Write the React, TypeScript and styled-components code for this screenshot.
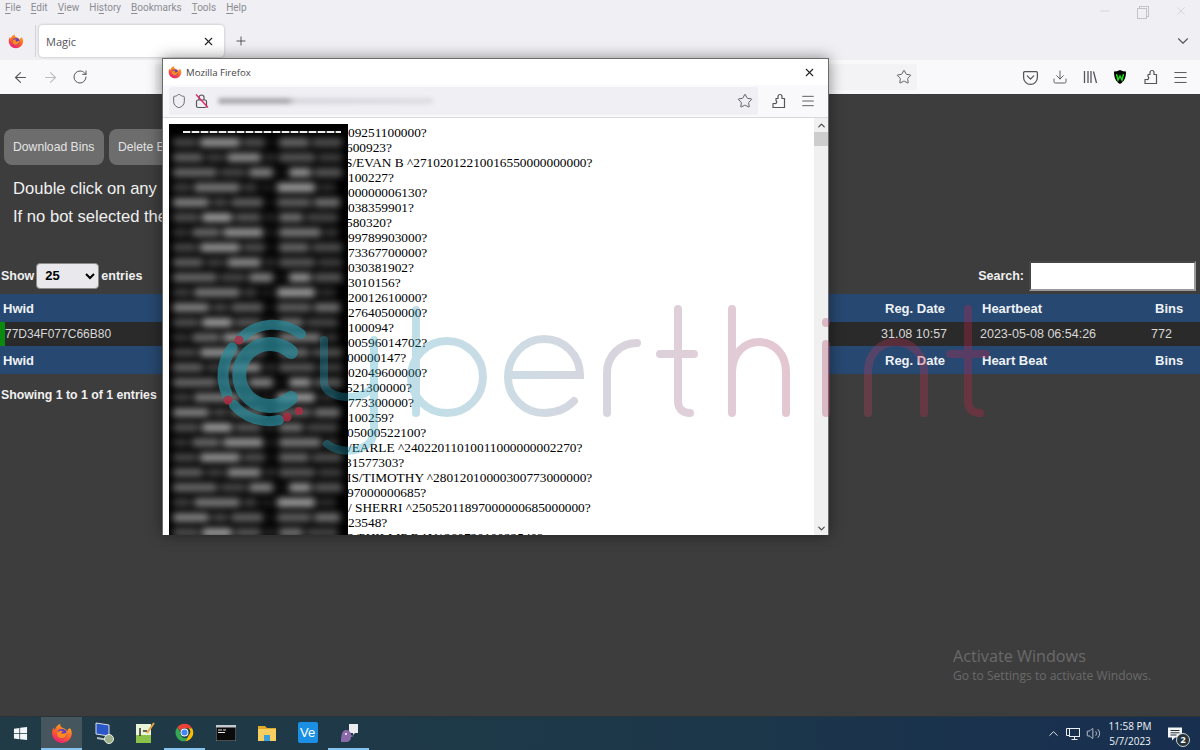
import styled, { createGlobalStyle } from "styled-components";
import {
    ArrowLeft,
    ArrowRight,
    ChevronDown,
    ChevronUp,
    Download,
    Menu,
    Minus,
    Plus,
    RotateCw,
    Shield,
    Star,
    Volume2,
    X,
} from "lucide-react";

const GlobalStyle = createGlobalStyle`
    html, body {
        margin: 0;
        padding: 0;
        background: #3d3d3d;
    }
    * {
        box-sizing: border-box;
    }
`;

const Page = styled.div`
    position: relative;
    width: 1200px;
    height: 750px;
    overflow: hidden;
    display: flex;
    flex-direction: column;
    font-family: "Liberation Sans", Arial, sans-serif;
`;

const MenuBar = styled.div`
    height: 20px;
    padding: 2px 0 0 5px;
    display: flex;
    align-items: flex-start;
    gap: 10px;
    background: #f0f0f4;
    color: #8c8c92;
    font: 10px Roboto, sans-serif;
    position: relative;

    u {
        text-underline-offset: 2px;
    }
`;

const WindowControls = styled.div`
    position: absolute;
    top: 4px;
    right: 12px;
    display: flex;
    gap: 24px;
    color: #c4c4c8;
`;

const RestoreIcon = styled.div`
    width: 14px;
    height: 14px;
    position: relative;

    &::before,
    &::after {
        content: "";
        position: absolute;
        border: 1px solid #c4c4c8;
        width: 8px;
        height: 9px;
    }
    &::before {
        left: 3px;
        top: 2px;
    }
    &::after {
        left: 1px;
        top: 4px;
        background: #f0f0f4;
    }
`;

const TabBar = styled.div`
    height: 40px;
    display: flex;
    align-items: flex-start;
    padding: 5px 8px 0 8px;
    background: #f0f0f4;
`;

const TabSlot = styled.div`
    width: 28px;
    height: 32px;
    display: flex;
    align-items: center;
    border-right: 1px solid #d4d4d8;
    margin-right: 3px;
`;

const Tab = styled.div`
    width: 185px;
    height: 32px;
    padding: 0 9px 0 7px;
    display: flex;
    align-items: center;
    justify-content: space-between;
    background: #fff;
    border-radius: 4px;
    box-shadow: 0 0 3px rgba(0, 0, 0, 0.25);
    color: #55555c;
    font: 11px "Open Sans", sans-serif;
`;

const NewTab = styled.div`
    width: 34px;
    height: 32px;
    display: flex;
    align-items: center;
    justify-content: center;
    color: #444;
`;

const TabSpacer = styled.div`
    flex: 1;
`;

const ListAll = styled.div`
    height: 32px;
    display: flex;
    align-items: center;
    color: #55555c;
`;

const NavBar = styled.div`
    height: 34px;
    display: flex;
    align-items: center;
    padding: 0 5px;
    background: #f9f9fb;
    color: #55555c;
`;

const NavButton = styled.div<{ $faded?: boolean }>`
    width: 30px;
    height: 30px;
    display: flex;
    align-items: center;
    justify-content: center;
    color: ${p => (p.$faded ? "#bcbcc2" : "#55555c")};
`;

const NavUrl = styled.div`
    flex: 1;
    height: 26px;
    margin: 0 98px 0 60px;
    display: flex;
    align-items: center;
    justify-content: flex-end;
    padding-right: 5px;
    background: #f3f3f6;
    border-radius: 2px;
`;

const Content = styled.div`
    flex: 1;
    background: #3d3d3d;
    padding-top: 34px;
    color: #f0f0f0;
    border-top: 1px solid #3a3a3a;
`;

const ButtonRow = styled.div`
    display: flex;
    gap: 5px;
    padding-left: 4px;
`;

const ActionButton = styled.button`
    width: 100px;
    height: 36px;
    padding: 0 0 0 9px;
    border: 0;
    border-radius: 8px;
    background: #6d6d6d;
    color: #e4e4e4;
    font: 12.2px "Liberation Sans", Arial, sans-serif;
    text-align: left;
    white-space: nowrap;
`;

const Notes = styled.div`
    margin: 10px 0 0 13px;
    font-size: 16.6px;
    line-height: 28px;
    white-space: nowrap;
`;

const TableTools = styled.div`
    margin-top: 29px;
    height: 31px;
    padding: 0 4px 0 1px;
    display: flex;
    align-items: center;
    justify-content: space-between;
    font-size: 12.5px;
    font-weight: 700;
`;

const ToolGroup = styled.label<{ $gap: number }>`
    display: flex;
    align-items: center;
    gap: ${p => p.$gap}px;
`;

const LengthSelect = styled.select`
    width: 63px;
    height: 26px;
    padding-left: 4px;
    border: 1px solid #8a8a8a;
    border-radius: 4px;
    background: #e9e9ed;
    color: #000;
    font: 700 13px "Liberation Sans", Arial, sans-serif;
`;

const SearchInput = styled.input`
    width: 167px;
    height: 30px;
    border: 2px inset #9a9a9a;
    background: #fff;
`;

const TableRow = styled.div<{ $head?: boolean }>`
    height: ${p => (p.$head ? 28 : 24)}px;
    display: grid;
    grid-template-columns: 881px 99px 171px 49px;
    align-items: center;
    background: ${p => (p.$head ? "#274870" : "#2a2a2a")};
    font-size: ${p => (p.$head ? 13 : 12.5)}px;
    font-weight: ${p => (p.$head ? 700 : 400)};
    color: ${p => (p.$head ? "#eef2f6" : "#d8d8d8")};
`;

const Cell = styled.div<{ $pad?: number }>`
    padding-left: ${p => p.$pad ?? 0}px;
    white-space: nowrap;
`;

const HwidCell = styled.div`
    height: 100%;
    display: flex;
    align-items: center;
    border-left: 5px solid #0b8a10;
    font-size: 12px;
`;

const TableTop = styled.div`
    margin-top: 3px;
`;

const TableInfo = styled.div`
    margin: 14px 0 0 1px;
    font-size: 12.3px;
    font-weight: 700;
`;

const Taskbar = styled.div`
    height: 34px;
    display: flex;
    align-items: center;
    background: linear-gradient(90deg, #203a46 0%, #1d3848 50%, #182f50 100%);
    border-top: 1px solid #2a3338;
`;

const StartButton = styled.div`
    width: 41px;
    display: flex;
    justify-content: center;
`;

const TaskApp = styled.div<{ $state?: "active" | "open" }>`
    width: 41px;
    height: 33px;
    display: flex;
    align-items: center;
    justify-content: center;
    background: ${p => (p.$state === "active" ? "#45565e" : "transparent")};
    border-bottom: 2px solid ${p => (p.$state ? "#86c3ee" : "transparent")};
`;

const Tray = styled.div`
    margin-left: auto;
    display: flex;
    align-items: center;
    color: #e8eef2;
`;

const TrayIcon = styled.div`
    width: 20px;
    display: flex;
    justify-content: center;
`;

const Clock = styled.div`
    width: 50px;
    margin-left: 2px;
    text-align: center;
    font: 10px/15px "Open Sans", sans-serif;
    color: #f0f4f6;
    white-space: nowrap;
`;

const Notify = styled.div`
    position: relative;
    width: 40px;
    height: 24px;
    display: flex;
    justify-content: center;
    align-items: center;
    margin-right: 5px;
`;

const NotifyBadge = styled.div`
    position: absolute;
    right: 5px;
    bottom: -1px;
    width: 14px;
    height: 14px;
    border-radius: 50%;
    border: 1px solid #cfd6da;
    background: #26333a;
    color: #fff;
    font: 700 9px/12px "Open Sans", sans-serif;
    text-align: center;
`;

const ActivateNote = styled.div`
    position: absolute;
    left: 953px;
    top: 645px;
    color: #6a6a6a;
    font: 12.1px/18px "Open Sans", sans-serif;
`;

const ActivateTitle = styled.div`
    font-size: 16.2px;
    line-height: 22px;
`;

const Popup = styled.div`
    position: absolute;
    left: 162px;
    top: 58px;
    width: 667px;
    height: 477px;
    display: flex;
    flex-direction: column;
    overflow: hidden;
    background: #fff;
    border: 1px solid #6b6b6b;
    border-bottom: 0;
    box-shadow: 0 0 14px rgba(0, 0, 0, 0.45);
`;

const PopupTitle = styled.div`
    height: 26px;
    padding: 0 12px 0 5px;
    display: flex;
    align-items: center;
    gap: 4px;
    color: #444;
    font: 9.6px "Open Sans", sans-serif;
`;

const PopupTitleText = styled.span`
    flex: 1;
`;

const PopupBar = styled.div`
    height: 33px;
    padding: 0 12px 0 6px;
    display: flex;
    align-items: center;
    gap: 14px;
    background: #f9f9fb;
    border-bottom: 1px solid #d8d8dc;
    color: #55555c;
`;

const PopupUrl = styled.div`
    flex: 1;
    height: 28px;
    margin-right: -2px;
    padding: 0 5px 0 2px;
    display: flex;
    align-items: center;
    justify-content: space-between;
    background: #f0f0f4;
    border-radius: 2px;
`;

const UrlGroup = styled.div`
    display: flex;
    align-items: center;
    gap: 7px;
`;

const BlurredUrl = styled.div`
    width: 215px;
    height: 6px;
    margin-left: 1px;
    border-radius: 3px;
    background: linear-gradient(90deg, #a8a8ae 0%, #a8a8ae 32%, #d6d6dc 36%, #dcdce2 100%);
    filter: blur(2px);
`;

const PopupBody = styled.div`
    position: relative;
    flex: 1;
    display: flex;
    min-height: 0;
    overflow: hidden;
`;

const DumpText = styled.div`
    flex: 1;
    padding: 7px 0 0 185px;
    font: 13.33px/15px "Liberation Serif", "Times New Roman", serif;
    color: #000;
    white-space: nowrap;
`;

const DumpLine = styled.div<{ $shift?: number }>`
    height: 15px;
    margin-left: ${p => -(p.$shift ?? 0)}px;
`;

const Redaction = styled.div`
    position: absolute;
    left: 6px;
    top: 6px;
    width: 179px;
    bottom: 0;
    padding-top: 7px;
    overflow: hidden;
    background: #000;
`;

const RedactionTop = styled.div`
    height: 1.5px;
    margin: 0 7px 2px 14px;
    background: repeating-linear-gradient(90deg, #eee 0 7px, #555 7px 9px);
`;

const BlurRow = styled.div`
    height: 15px;
    display: flex;
    align-items: center;
    padding-left: 4px;
    gap: 3px;
    filter: blur(3.5px);
`;

const BlurBit = styled.div`
    height: 9px;
    flex: none;
    background: #b4b4b4;
`;

const Scrollbar = styled.div`
    width: 14px;
    display: flex;
    flex-direction: column;
    align-items: center;
    background: #f0f0f0;
    color: #444;
`;

const ScrollArrow = styled.div`
    height: 14px;
    display: flex;
    align-items: center;
`;

const ScrollThumb = styled.div`
    width: 100%;
    height: 14px;
    background: #cdcdcd;
`;

const ScrollTrack = styled.div`
    flex: 1;
`;

const WatermarkSvg = styled.svg`
    position: absolute;
    left: 0;
    top: 0;
    pointer-events: none;
`;

const dumpLines: [string, number?][] = [
    ["09251100000?"],
    ["600923?", 2],
    ["S/EVAN B ^27102012210016550000000000?", 3],
    ["100227?"],
    ["00000006130?"],
    ["038359901?"],
    ["580320?", 2],
    ["99789903000?"],
    ["73367700000?"],
    ["030381902?"],
    ["3010156?"],
    ["20012610000?"],
    ["27640500000?"],
    ["100094?"],
    ["00596014702?"],
    ["00000147?", 1],
    ["02049600000?"],
    ["521300000?", 2],
    ["773300000?"],
    ["100259?"],
    ["05000522100?", 1],
    ["/EARLE ^24022011010011000000002270?"],
    ["31577303?", 3],
    ["IS/TIMOTHY ^28012010000300773000000?", 1],
    ["97000000685?", 1],
    ["/ SHERRI ^25052011897000000685000000?"],
    ["23548?"],
    ["D/PHILLIP RAY^26072010022540?", 3],
];

// [width, brightness] per smear, just has to look like blurred text
const blurPattern: [number, number][][] = [
    [[24, 0.4], [40, 0.85], [22, 0.45], [8, 0.1], [30, 0.6], [30, 0.45]],
    [[30, 0.55], [18, 0.35], [34, 0.8], [12, 0.25], [36, 0.5], [24, 0.35]],
    [[44, 0.6], [26, 0.4], [24, 0.75], [10, 0.1], [22, 0.85], [28, 0.5]],
    [[18, 0.35], [46, 0.7], [14, 0.35], [14, 0.15], [38, 0.9], [18, 0.25]],
    [[36, 0.75], [16, 0.4], [32, 0.55], [8, 0.1], [34, 0.55], [26, 0.65]],
    [[26, 0.45], [30, 0.9], [26, 0.5], [12, 0.2], [24, 0.65], [32, 0.4]],
    [[16, 0.3], [28, 0.6], [40, 0.85], [10, 0.15], [42, 0.7], [14, 0.3]],
];

function FirefoxLogo({ size = 16 }: { size?: number }) {
    return (
        <svg width={size} height={size} viewBox="0 0 32 32">
            <defs>
                <linearGradient id="ffg" x1="0.7" y1="0" x2="0.2" y2="1">
                    <stop offset="0" stopColor="#ffb01f" />
                    <stop offset="0.55" stopColor="#ff5a2c" />
                    <stop offset="1" stopColor="#e31587" />
                </linearGradient>
            </defs>
            <path
                d="M28 9c1.8 3 2.6 6.2 2 9.6C28.800 25.600 23 30.500 16 30.500 8 30.500 1.500 24 1.500 16c0-3 1-6 2.500-8 .1 1.600.7 2.800 1.600 3.600C6.500 7 10 4 13.500 2.500c-.6 2.500.4 4.200 2.500 5.500 3 1.800 6.500 2 7.500 6C24 10 26 9 28 9z"
                fill="url(#ffg)"
            />
            <circle cx="16" cy="17" r="7" fill="#5b3fc4" />
            <path d="M9 15c3-3 7-3 9-1-2 0-3 1-3 2.500 3 1 6 0 8-2 .5 5-3 9-7.500 9S8 20 9 15z" fill="#ff8a1f" />
        </svg>
    );
}

function PocketIcon() {
    return (
        <svg width="17" height="17" viewBox="0 0 16 16" fill="none" stroke="#55555c" strokeWidth="1.2">
            <path d="M2.500 2.500h11a1 1 0 0 1 1 1V8a6.500 6.500 0 0 1-13 0V3.500a1 1 0 0 1 1-1z" />
            <path d="M5 6.500l3 3 3-3" strokeLinecap="round" strokeLinejoin="round" />
        </svg>
    );
}

function LibraryIcon() {
    return (
        <svg width="16" height="16" viewBox="0 0 16 16" fill="none" stroke="#55555c" strokeWidth="1.300">
            <path d="M2.500 2v12M6 2v12M9 2v12M11.500 2.500l3 11.500" />
        </svg>
    );
}

function GuardIcon() {
    return (
        <svg width="16" height="16" viewBox="0 0 16 16">
            <path d="M8 1c2 1 4 1.500 6 1.500 0 6-1.500 10-6 12.500C3.500 12.500 2 8.500 2 2.500 4 2.500 6 2 8 1z" fill="#000" />
            <path d="M4.500 5l1.500 6 2-4 2 4 1.500-6" fill="none" stroke="#16e016" strokeWidth="1.500" />
        </svg>
    );
}

function ExtensionIcon() {
    return (
        <svg width="16" height="16" viewBox="0 0 16 16" fill="none" stroke="#55555c" strokeWidth="1.200" strokeLinejoin="round">
            <path d="M6 5.500h2V3.500a2 2 0 0 1 4 0v2h2.500v9H3v-4h1.500a1.700 1.700 0 0 0 1.500-3z" />
        </svg>
    );
}

function OpenLockIcon() {
    return (
        <svg width="16" height="16" viewBox="0 0 16 16" fill="none">
            <rect x="2.500" y="7" width="10" height="7.500" rx="1.500" stroke="#55555c" strokeWidth="1.200" />
            <path d="M5 7V4.500a2.500 2.500 0 0 1 5 0V7" stroke="#55555c" strokeWidth="1.200" />
            <path d="M2 1.500l12 13" stroke="#e0245e" strokeWidth="1.300" />
        </svg>
    );
}

function WindowsLogo() {
    return (
        <svg width="15" height="15" viewBox="0 0 16 16" fill="#f2f6f8">
            <path d="M1 2.800l5.800-.8v5.600H1zM7.600 1.900L15 1v6.600H7.600zM1 8.400h5.800V14L1 13.200zM7.600 8.400H15V15l-7.400-1z" />
        </svg>
    );
}

function RemoteDesktopIcon() {
    return (
        <svg width="22" height="22" viewBox="0 0 22 22">
            <path d="M4 1l13 2v11L4 12z" fill="#2a56c8" stroke="#d8dde2" strokeWidth="1" />
            <path d="M5 15l11 2v2l-11-2z" fill="#b9c0c8" />
            <circle cx="17" cy="17" r="4.500" fill="#9fb08c" stroke="#e8eee2" />
        </svg>
    );
}

function NotepadIcon() {
    return (
        <svg width="22" height="22" viewBox="0 0 22 22">
            <rect x="3" y="2" width="15" height="19" fill="#e9f3d8" />
            <rect x="3" y="13" width="15" height="8" fill="#8bc34a" />
            <path d="M7 6v8M10 9h4" stroke="#333" strokeWidth="1.500" />
            <path d="M21 1L14 11" stroke="#e8a33d" strokeWidth="2" />
        </svg>
    );
}

function ChromeIcon() {
    return (
        <svg width="21" height="21" viewBox="0 0 48 48">
            <path d="M24 4a20 20 0 0 1 17.300 10H24a10 10 0 0 0-9.500 7L7.700 12A20 20 0 0 1 24 4z" fill="#ea4335" />
            <path d="M41.300 14A20 20 0 0 1 26 44l8.600-15A10 10 0 0 0 33 14z" fill="#fbbc04" />
            <path d="M7.700 12A20 20 0 0 0 26 44l8.600-15a10 10 0 0 1-19.600-5z" fill="#34a853" />
            <circle cx="24" cy="24" r="9" fill="#fff" />
            <circle cx="24" cy="24" r="7" fill="#4285f4" />
        </svg>
    );
}

function ConsoleIcon() {
    return (
        <svg width="20" height="16" viewBox="0 0 20 16">
            <rect width="20" height="16" fill="#0b0b0b" stroke="#8a9096" />
            <rect width="20" height="2.500" fill="#c4cacf" />
            <path d="M2 5h4M7 5h3M2 7.500h7" stroke="#e8e8e8" strokeWidth="1" />
        </svg>
    );
}

function FolderIcon() {
    return (
        <svg width="20" height="18" viewBox="0 0 20 18">
            <path d="M1 2h7l2 2h9v3H1z" fill="#e0a92c" />
            <rect x="1" y="5" width="18" height="12" fill="#f5cf5f" />
            <rect x="7" y="11" width="6" height="6" fill="#3aa0dd" />
        </svg>
    );
}

function VncIcon() {
    return (
        <svg width="20" height="21" viewBox="0 0 20 21">
            <rect width="20" height="21" rx="2" fill="#1a8fe3" />
            <text x="2" y="15" fontSize="13" fontFamily="Liberation Sans" fill="#fff">
                Ve
            </text>
        </svg>
    );
}

function ChatBirdIcon() {
    return (
        <svg width="22" height="22" viewBox="0 0 22 22">
            <path d="M11 2h9v9h-3l-2 2v-2h-4z" fill="#ececf0" />
            <path d="M3 20c0-7 1-12 5-12 3 0 5 2 5 5l3 1-3 1c0 3-2 5-5 5z" fill="#8a6aa8" />
            <circle cx="8" cy="12" r="1" fill="#fff" />
        </svg>
    );
}

function NetworkIcon() {
    return (
        <svg width="16" height="16" viewBox="0 0 16 16" fill="none" stroke="#e8eef2" strokeWidth="1">
            <rect x="4.500" y="2.500" width="10" height="8" />
            <path d="M9.500 10.500v3M6.500 13.500h6M1.500 2.500h3M1.500 2.500v7h3" />
        </svg>
    );
}

function NotifyIcon() {
    return (
        <svg width="16" height="16" viewBox="0 0 16 16">
            <path d="M1 1.500h14v10H8L5 14.500v-3H1z" fill="#f4f6f8" />
            <path d="M3.500 4.500h9M3.500 6.800h9M3.500 9h6" stroke="#26333a" strokeWidth="1" />
        </svg>
    );
}

// the brand watermark stamped over the whole screenshot
function Watermark() {
    return (
        <WatermarkSvg width="1200" height="750" viewBox="0 0 1200 750">
            <defs>
                <linearGradient id="wm" gradientUnits="userSpaceOnUse" x1="330" y1="0" x2="990" y2="0">
                    <stop offset="0" stopColor="#1aa6c4" />
                    <stop offset="0.3" stopColor="#6e90ab" />
                    <stop offset="0.55" stopColor="#a06a88" />
                    <stop offset="1" stopColor="#c41f45" />
                </linearGradient>
            </defs>
            <g fill="none" stroke="url(#wm)" strokeWidth="8" strokeLinecap="round" opacity="0.32">
                <path d="M324 340v42c0 20 48 20 50 0" />
                <path d="M374 340v90c0 22-32 26-47 14" />
                <path d="M416 310v103" />
                <circle cx="447" cy="377" r="36" />
                <path d="M510 375h70c0-20-16-36-36-36s-36 17-36 38 17 36 36 36c12 0 22-4 30-12" />
                <path d="M607 413v-40c0-18 14-30 30-30" />
                <path d="M678 309v92c0 8 5 12 12 12M660 354h34" />
                <path d="M732 309v104M732 372c0-18 12-30 27-30s27 12 27 30v41" />
                <path d="M826 344v69M826 322v1" />
                <path d="M868 413v-41c0-18 12-30 28-30s28 12 28 30v41" />
                <path d="M968 309v92c0 8 5 12 12 12M950 354h36" />
            </g>
            <g fill="none" stroke="#2a8b9b" strokeLinecap="round" opacity="0.72" transform="translate(-3 0)">
                <path d="M294 352a31 31 0 1 0 0 46" strokeWidth="14" />
                <path d="M244 338a46 46 0 0 1 60-4" strokeWidth="10" />
                <path d="M235 348a46 46 0 0 0-5 46" strokeWidth="11" />
                <path d="M237 405a46 46 0 0 0 45 15" strokeWidth="10" />
            </g>
            <g fill="#b32c42" opacity="0.8">
                <circle cx="239" cy="340" r="4.500" />
                <circle cx="228" cy="400" r="4.500" />
                <circle cx="287" cy="417" r="4.500" />
                <circle cx="299" cy="411" r="4" />
            </g>
        </WatermarkSvg>
    );
}

export default function App() {
    return (
        <Page>
            <GlobalStyle />
            <MenuBar>
                <span><u>F</u>ile</span>
                <span><u>E</u>dit</span>
                <span><u>V</u>iew</span>
                <span>Hi<u>s</u>tory</span>
                <span><u>B</u>ookmarks</span>
                <span><u>T</u>ools</span>
                <span><u>H</u>elp</span>
                <WindowControls>
                    <Minus size={14} strokeWidth={1} />
                    <RestoreIcon />
                    <X size={14} strokeWidth={1} />
                </WindowControls>
            </MenuBar>
            <TabBar>
                <TabSlot>
                    <FirefoxLogo />
                </TabSlot>
                <Tab>
                    <span>Magic</span>
                    <X size={13} color="#222" />
                </Tab>
                <NewTab>
                    <Plus size={14} strokeWidth={1.5} />
                </NewTab>
                <TabSpacer />
                <ListAll>
                    <ChevronDown size={18} strokeWidth={1.5} />
                </ListAll>
            </TabBar>
            <NavBar>
                <NavButton><ArrowLeft size={17} strokeWidth={1.5} /></NavButton>
                <NavButton $faded><ArrowRight size={17} strokeWidth={1.5} /></NavButton>
                <NavButton><RotateCw size={16} strokeWidth={1.5} /></NavButton>
                <NavUrl>
                    <Star size={16} strokeWidth={1.4} />
                </NavUrl>
                <NavButton><PocketIcon /></NavButton>
                <NavButton><Download size={16} strokeWidth={1.4} /></NavButton>
                <NavButton><LibraryIcon /></NavButton>
                <NavButton><GuardIcon /></NavButton>
                <NavButton><ExtensionIcon /></NavButton>
                <NavButton><Menu size={17} strokeWidth={1.4} /></NavButton>
            </NavBar>
            <Content>
                <ButtonRow>
                    <ActionButton>Download Bins</ActionButton>
                    <ActionButton>Delete Bins</ActionButton>
                </ButtonRow>
                <Notes>
                    <div>Double click on any</div>
                    <div>If no bot selected the</div>
                </Notes>
                <TableTools>
                    <ToolGroup $gap={2}>
                        Show
                        <LengthSelect defaultValue="25">
                            <option>10</option>
                            <option>25</option>
                            <option>50</option>
                        </LengthSelect>
                        entries
                    </ToolGroup>
                    <ToolGroup $gap={5}>
                        Search:
                        <SearchInput />
                    </ToolGroup>
                </TableTools>
                <TableTop>
                    <TableRow $head>
                        <Cell $pad={3}>Hwid</Cell>
                        <Cell $pad={4}>Reg. Date</Cell>
                        <Cell $pad={2}>Heartbeat</Cell>
                        <Cell $pad={4}>Bins</Cell>
                    </TableRow>
                    <TableRow>
                        <HwidCell>77D34F077C66B80</HwidCell>
                        <Cell>31.08 10:57</Cell>
                        <Cell>2023-05-08 06:54:26</Cell>
                        <Cell>772</Cell>
                    </TableRow>
                    <TableRow $head>
                        <Cell $pad={3}>Hwid</Cell>
                        <Cell $pad={4}>Reg. Date</Cell>
                        <Cell $pad={2}>Heart Beat</Cell>
                        <Cell $pad={4}>Bins</Cell>
                    </TableRow>
                </TableTop>
                <TableInfo>Showing 1 to 1 of 1 entries</TableInfo>
            </Content>
            <Taskbar>
                <StartButton><WindowsLogo /></StartButton>
                <TaskApp $state="active"><FirefoxLogo size={22} /></TaskApp>
                <TaskApp><RemoteDesktopIcon /></TaskApp>
                <TaskApp><NotepadIcon /></TaskApp>
                <TaskApp $state="open"><ChromeIcon /></TaskApp>
                <TaskApp><ConsoleIcon /></TaskApp>
                <TaskApp><FolderIcon /></TaskApp>
                <TaskApp><VncIcon /></TaskApp>
                <TaskApp $state="open"><ChatBirdIcon /></TaskApp>
                <Tray>
                    <TrayIcon><ChevronUp size={15} strokeWidth={1.5} /></TrayIcon>
                    <TrayIcon><NetworkIcon /></TrayIcon>
                    <TrayIcon><Volume2 size={15} strokeWidth={1.2} /></TrayIcon>
                    <Clock>
                        <div>11:58 PM</div>
                        <div>5/7/2023</div>
                    </Clock>
                    <Notify>
                        <NotifyIcon />
                        <NotifyBadge>2</NotifyBadge>
                    </Notify>
                </Tray>
            </Taskbar>
            <ActivateNote>
                <ActivateTitle>Activate Windows</ActivateTitle>
                Go to Settings to activate Windows.
            </ActivateNote>
            <Popup>
                <PopupTitle>
                    <FirefoxLogo size={14} />
                    <PopupTitleText>Mozilla Firefox</PopupTitleText>
                    <X size={13} color="#222" />
                </PopupTitle>
                <PopupBar>
                    <PopupUrl>
                        <UrlGroup>
                            <Shield size={16} strokeWidth={1.3} />
                            <OpenLockIcon />
                            <BlurredUrl />
                        </UrlGroup>
                        <Star size={16} strokeWidth={1.4} />
                    </PopupUrl>
                    <ExtensionIcon />
                    <Menu size={16} strokeWidth={1.4} />
                </PopupBar>
                <PopupBody>
                    <DumpText>
                        {dumpLines.map(([text, shift], i) => (
                            <DumpLine key={i} $shift={shift}>{text}</DumpLine>
                        ))}
                    </DumpText>
                    <Redaction>
                        <RedactionTop />
                        {dumpLines.map((_, i) => (
                            <BlurRow key={i}>
                                {blurPattern[i % blurPattern.length].map(([w, o], j) => (
                                    <BlurBit key={j} style={{ width: w, opacity: o }} />
                                ))}
                            </BlurRow>
                        ))}
                    </Redaction>
                    <Scrollbar>
                        <ScrollArrow><ChevronUp size={11} strokeWidth={2.5} /></ScrollArrow>
                        <ScrollThumb />
                        <ScrollTrack />
                        <ScrollArrow><ChevronDown size={11} strokeWidth={2.5} /></ScrollArrow>
                    </Scrollbar>
                </PopupBody>
            </Popup>
            <Watermark />
        </Page>
    );
}
